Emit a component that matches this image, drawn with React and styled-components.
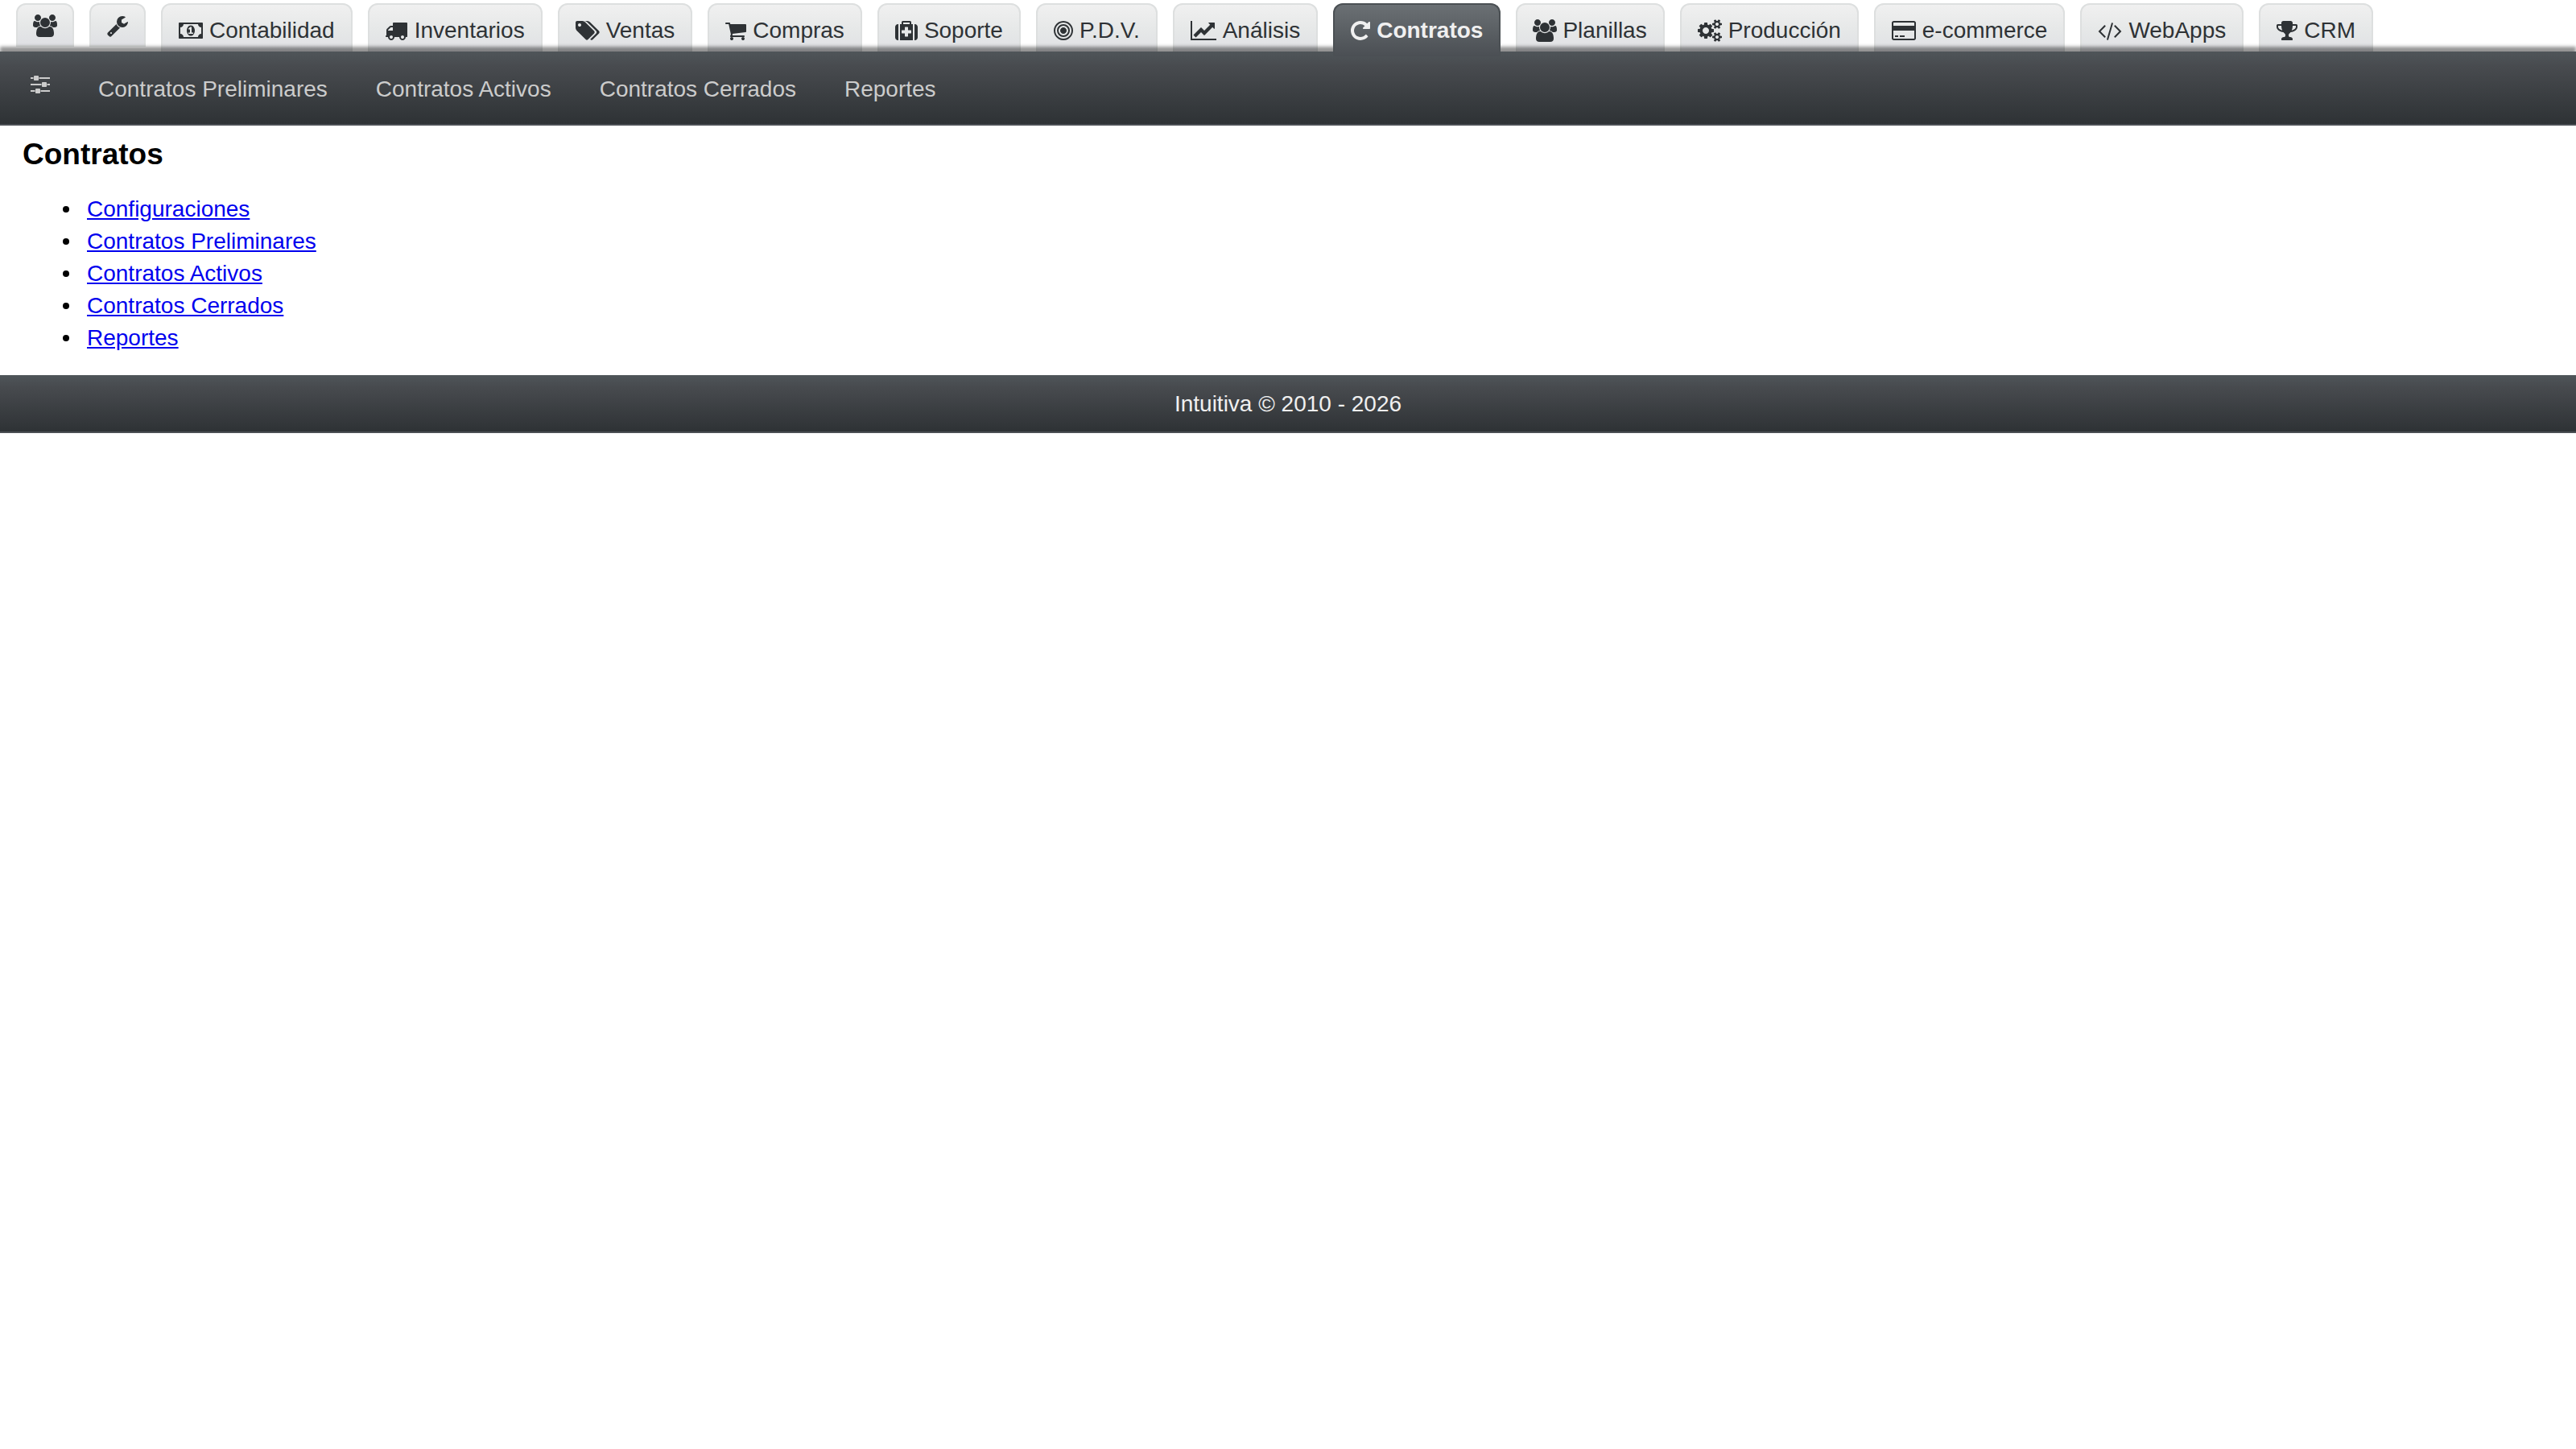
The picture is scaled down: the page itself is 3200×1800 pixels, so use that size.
import React from "react";
import styled, { createGlobalStyle, css } from "styled-components";

const GlobalStyle = createGlobalStyle`
  body {
    margin: 0;
    background: #ffffff;
    color: #000000;
    font: 28px/40px "Liberation Sans", Arial, Helvetica, sans-serif;
  }
`;

/* Glyph outlines on a 1792-unit em square; "x" and "w" give the drawn span. */
const glyphs = {
  users: { x: 128, w: 1792, d: "M657 896q-162 5-265 128h-134q-82 0-138-40.5t-56-118.5q0-353 124-353 6 0 43.5 21t97.5 42.5 119 21.5q67 0 133-23-5 37-5 66 0 139 81 256zm1071 637q0 120-73 189.5t-194 69.5h-874q-121 0-194-69.5t-73-189.5q0-53 3.5-103.5t14-109 26.5-108.5 43-97.5 62-81 85.5-53.5 111.5-20q10 0 43 21.5t73 48 107 48 135 21.5 135-21.5 107-48 73-48 43-21.5q61 0 111.5 20t85.5 53.5 62 81 43 97.5 26.5 108.5 14 109 3.5 103.5zm-1024-1277q0 106-75 181t-181 75-181-75-75-181 75-181 181-75 181 75 75 181zm704 384q0 159-112.5 271.5t-271.5 112.5-271.5-112.5-112.5-271.5 112.5-271.5 271.5-112.5 271.5 112.5 112.5 271.5zm576 225q0 78-56 118.5t-138 40.5h-134q-103-123-265-128 81-117 81-256 0-29-5-66 66 23 133 23 59 0 119-21.5t97.5-42.5 43.5-21q124 0 124 353zm-128-609q0 106-75 181t-181 75-181-75-75-181 75-181 181-75 181 75 75 181z" },
  wrench: { x: 64, w: 1664, d: "M448 1472q0-26-19-45t-45-19-45 19-19 45 19 45 45 19 45-19 19-45zm644-420l-682 682q-37 37-90 37-52 0-91-37l-106-108q-38-36-38-90 0-53 38-91l681-681q39 98 114.5 173.5t173.5 114.5zm634-435q0 39-23 106-47 134-164.5 217.5t-258.5 83.5q-185 0-316.5-131.5t-131.5-316.5 131.5-316.5 316.5-131.5q58 0 121.5 16.5t107.5 46.5q16 11 16 28t-16 28l-293 169v224l193 107q5-3 79-48.5t135.5-81 70.5-35.5q15 0 23.5 10t8.5 25z" },
  money: { x: 0, w: 1920, d: "M768 1152h384v-96h-128v-448h-114l-148 137 77 80q42-37 55-57h2v288h-128v96zm512-256q0 70-21 142t-59.5 134-101.5 101-138 39-138-39-101.5-101-59.5-134-21-142 21-142 59.5-134 101.5-101 138-39 138 39 101.5 101 59.5 134 21 142zm512 256v-512q-106 0-181-75t-75-181h-1152q0 106-75 181t-181 75v512q106 0 181 75t75 181h1152q0-106 75-181t181-75zm128-832v1152q0 26-19 45t-45 19h-1792q-26 0-45-19t-19-45v-1152q0-26 19-45t45-19h1792q26 0 45 19t19 45z" },
  truck: { x: 64, w: 1792, d: "M640 1408q0-52-38-90t-90-38-90 38-38 90 38 90 90 38 90-38 38-90zm-384-512h384v-256h-158q-13 0-22 9l-195 195q-9 9-9 22v30zm1280 512q0-52-38-90t-90-38-90 38-38 90 38 90 90 38 90-38 38-90zm256-1088v1024q0 15-4 26.5t-13.5 18.5-16.5 11.5-23.5 6-22.5 2-25.5 0-22.5-.5q0 106-75 181t-181 75-181-75-75-181h-384q0 106-75 181t-181 75-181-75-75-181h-64q-3 0-22.5.5t-25.5 0-22.5-2-23.5-6-16.5-11.5-13.5-18.5-4-26.5q0-26 19-45t45-19v-320q0-8-.5-35t0-38 2.5-34.5 6.5-37 14-30.5 22.5-30l198-198q19-19 50.5-32t58.5-13h160v-192q0-26 19-45t45-19h1024q26 0 45 19t19 45z" },
  tags: { x: 0, w: 1920, d: "M448 448q0-53-37.5-90.5t-90.5-37.5-90.5 37.5-37.5 90.5 37.5 90.5 90.5 37.5 90.5-37.5 37.5-90.5zm1067 576q0 53-37 90l-491 492q-39 37-91 37-53 0-90-37l-715-716q-38-37-64.5-101t-26.5-117v-416q0-52 38-90t90-38h416q53 0 117 26.5t102 64.5l715 714q37 39 37 91zm384 0q0 53-37 90l-491 492q-39 37-91 37-36 0-59-14t-53-45l470-470q37-37 37-90 0-52-37-91l-715-714q-38-38-102-64.5t-117-26.5h224q53 0 117 26.5t102 64.5l715 714q37 39 37 91z" },
  cart: { x: 64, w: 1664, d: "M704 1536q0 52-38 90t-90 38-90-38-38-90 38-90 90-38 90 38 38 90zm896 0q0 52-38 90t-90 38-90-38-38-90 38-90 90-38 90 38 38 90zm128-1088v512q0 24-16.5 42.5t-40.5 21.5l-1044 122q13 60 13 70 0 16-24 64h920q26 0 45 19t19 45-19 45-45 19h-1024q-26 0-45-19t-19-45q0-11 8-31.5t16-36 21.5-40 15.5-29.5l-177-823h-204q-26 0-45-19t-19-45 19-45 45-19h256q16 0 28.5 6.5t19.5 15.5 13 24.5 8 26 5.5 29.5 4.5 26h1201q26 0 45 19t19 45z" },
  medkit: { x: 0, w: 1792, d: "M1280 1088v-192q0-14-9-23t-23-9h-224v-224q0-14-9-23t-23-9h-192q-14 0-23 9t-9 23v224h-224q-14 0-23 9t-9 23v192q0 14 9 23t23 9h224v224q0 14 9 23t23 9h192q14 0 23-9t9-23v-224h224q14 0 23-9t9-23zm-640-704h512v-128h-512v128zm-384 0v1280h-32q-92 0-158-66t-66-158v-832q0-92 66-158t158-66h32zm1152 0v1280h-1024v-1280h128v-160q0-40 28-68t68-28h576q40 0 68 28t28 68v160h128zm384 224v832q0 92-66 158t-158 66h-32v-1280h32q92 0 158 66t66 158z" },
  bullseye: { x: 128, w: 1536, d: "M1152 896q0 106-75 181t-181 75-181-75-75-181 75-181 181-75 181 75 75 181zm128 0q0-159-112.5-271.5t-271.5-112.5-271.5 112.5-112.5 271.5 112.5 271.5 271.5 112.5 271.5-112.5 112.5-271.5zm128 0q0 212-150 362t-362 150-362-150-150-362 150-362 362-150 362 150 150 362zm128 0q0-130-51-248.5t-136.5-204-204-136.5-248.5-51-248.5 51-204 136.5-136.5 204-51 248.5 51 248.5 136.5 204 204 136.5 248.5 51 248.5-51 204-136.5 136.5-204 51-248.5zm128 0q0 209-103 385.5t-279.5 279.5-385.5 103-385.5-103-279.5-279.5-103-385.5 103-385.5 279.5-279.5 385.5-103 385.5 103 279.5 279.5 103 385.5z" },
  chart: { x: 0, w: 2048, d: "M2048 1536v128h-2048v-1536h128v1408h1920zm-128-1248v435q0 21-19.5 29.5t-35.5-7.5l-121-121-633 633q-10 10-23 10t-23-10l-233-233-416 416-192-192 585-585q10-10 23-10t23 10l233 233 464-464-121-121q-16-16-7.5-35.5t29.5-19.5h435q14 0 23 9t9 23z" },
  repeat: { x: 128, w: 1536, d: "M1664 256v448q0 26-19 45t-45 19h-448q-42 0-59-40-17-39 14-69l138-138q-148-137-349-137-104 0-198.5 40.5t-163.5 109.5-109.5 163.5-40.5 198.5 40.5 198.5 109.5 163.5 163.5 109.5 198.5 40.5q119 0 225-52t179-147q7-10 23-12 15 0 25 9l137 138q9 8 9.5 20.5t-7.5 22.5q-109 132-264 204.5t-327 72.5q-156 0-298-61t-245-164-164-245-61-298 61-298 164-245 245-164 298-61q147 0 284.5 55.5t244.5 156.5l130-129q29-31 70-14 39 17 39 59z" },
  cogs: { x: 0, w: 1920, d: "M896 896q0-106-75-181t-181-75-181 75-75 181 75 181 181 75 181-75 75-181zm768 512q0-52-38-90t-90-38-90 38-38 90q0 53 37.5 90.5t90.5 37.5 90.5-37.5 37.5-90.5zm0-1024q0-52-38-90t-90-38-90 38-38 90q0 53 37.5 90.5t90.5 37.5 90.5-37.5 37.5-90.5zm-384 421v185q0 10-7 19.5t-16 10.5l-155 24q-11 35-32 76 34 48 90 115 7 11 7 20 0 12-7 19-23 30-82.5 89.5t-78.5 59.5q-11 0-21-7l-115-90q-37 19-77 31-11 108-23 155-7 24-30 24h-186q-11 0-20-7.5t-10-17.5l-23-153q-34-10-75-31l-118 89q-7 7-20 7-11 0-21-8-144-133-144-160 0-9 7-19 10-14 41-53t47-61q-23-44-35-82l-152-24q-10-1-17-9.5t-7-19.5v-185q0-10 7-19.5t16-10.5l155-24q11-35 32-76-34-48-90-115-7-11-7-20 0-12 7-20 22-30 82-89t79-59q11 0 21 7l115 90q34-18 77-32 11-108 23-154 7-24 30-24h186q11 0 20 7.5t10 17.5l23 153q34 10 75 31l118-89q8-7 20-7 11 0 21 8 144 133 144 160 0 8-7 19-12 16-42 54t-45 60q23 48 34 82l152 23q10 2 17 10.5t7 19.5zm640 533v140q0 16-149 31-12 27-30 52 51 113 51 138 0 4-4 7-122 71-124 71-8 0-46-47t-52-68q-20 2-30 2t-30-2q-14 21-52 68t-46 47q-2 0-124-71-4-3-4-7 0-25 51-138-18-25-30-52-149-15-149-31v-140q0-16 149-31 13-29 30-52-51-113-51-138 0-4 4-7 4-2 35-20t59-34 30-16q8 0 46 46.5t52 67.5q20-2 30-2t30 2q51-71 92-112l6-2q4 0 124 70 4 3 4 7 0 25-51 138 17 23 30 52 149 15 149 31zm0-1024v140q0 16-149 31-12 27-30 52 51 113 51 138 0 4-4 7-122 71-124 71-8 0-46-47t-52-68q-20 2-30 2t-30-2q-14 21-52 68t-46 47q-2 0-124-71-4-3-4-7 0-25 51-138-18-25-30-52-149-15-149-31v-140q0-16 149-31 13-29 30-52-51-113-51-138 0-4 4-7 4-2 35-20t59-34 30-16q8 0 46 46.5t52 67.5q20-2 30-2t30 2q51-71 92-112l6-2q4 0 124 70 4 3 4 7 0 25-51 138 17 23 30 52 149 15 149 31z" },
  card: { x: 0, w: 1920, d: "M1760 128q66 0 113 47t47 113v1216q0 66-47 113t-113 47h-1600q-66 0-113-47t-47-113v-1216q0-66 47-113t113-47h1600zm-1600 128q-13 0-22.5 9.5t-9.5 22.5v224h1664v-224q0-13-9.5-22.5t-22.5-9.5h-1600zm1600 1280q13 0 22.5-9.5t9.5-22.5v-608h-1664v608q0 13 9.5 22.5t22.5 9.5h1600zm-1504-128v-128h256v128h-256zm384 0v-128h384v128h-384z" },
  code: { x: 0, w: 1920, d: "M617 1399l-50 50q-10 10-23 10t-23-10l-466-466q-10-10-10-23t10-23l466-466q10-10 23-10t23 10l50 50q10 10 10 23t-10 23l-393 393 393 393q10 10 10 23t-10 23zm591-1067l-373 1291q-4 13-15.5 19.5t-23.5 2.5l-62-17q-13-4-19.5-15.5t-2.5-24.5l373-1291q4-13 15.5-19.5t23.5-2.5l62 17q13 4 19.5 15.5t2.5 24.5zm657 651l-466 466q-10 10-23 10t-23-10l-50-50q-10-10-10-23t10-23l393-393-393-393q-10-10-10-23t10-23l50-50q10-10 23-10t23 10l466 466q10 10 10 23t-10 23z" },
  trophy: { x: 64, w: 1664, d: "M522 883q-74-162-74-371h-256v96q0 78 94.5 162t235.5 113zm1078-275v-96h-256q0 209-74 371 141-29 235.5-113t94.5-162zm128-128v128q0 71-41.5 143t-112 130-173 97.5-215.5 44.5q-42 54-95 95-38 34-52.5 72.5t-14.5 89.5q0 54 30.5 91t97.5 37q75 0 133.5 45.5t58.5 114.5v64q0 14-9 23t-23 9h-832q-14 0-23-9t-9-23v-64q0-69 58.5-114.5t133.5-45.5q67 0 97.5-37t30.5-91q0-51-14.5-89.5t-52.5-72.5q-53-41-95-95-113-5-215.5-44.5t-173-97.5-112-130-41.5-143v-128q0-40 28-68t68-28h288v-96q0-66 47-113t113-47h576q66 0 113 47t47 113v96h288q40 0 68 28t28 68z" },
  sliders: { x: 128, w: 1536, d: "M480 1408v128h-352v-128h352zm352-128q26 0 45 19t19 45v256q0 26-19 45t-45 19h-256q-26 0-45-19t-19-45v-256q0-26 19-45t45-19h256zm160-384v128h-864v-128h864zm-640-512v128h-224v-128h224zm1312 1024v128h-736v-128h736zm-960-1152q26 0 45 19t19 45v256q0 26-19 45t-45 19h-256q-26 0-45-19t-19-45v-256q0-26 19-45t45-19h256zm640 512q26 0 45 19t19 45v256q0 26-19 45t-45 19h-256q-26 0-45-19t-19-45v-256q0-26 19-45t45-19h256zm320 128v128h-224v-128h224zm0-512v128h-864v-128h864z" },
};

const Glyph = styled.svg`
  display: block;
  flex: none;
  height: 28px;
  fill: currentColor;
  overflow: visible;
`;

function Icon({ name }) {
  const { x, w, d } = glyphs[name];
  return (
    <Glyph viewBox={`${x} 0 ${w} 1792`} width={w / 64} aria-hidden="true">
      <path d={d} />
    </Glyph>
  );
}

const bar = css`
  background: linear-gradient(#4f5559, #484b4f 20%, #2e3235);
  border-bottom: 2px solid #4b4f54;
`;

const TabBar = styled.nav`
  display: flex;
  align-items: flex-start;
  gap: 19px;
  height: 60px;
  padding: 4px 20px 0;
`;

const Tab = styled.a`
  display: flex;
  box-sizing: border-box;
  align-items: center;
  gap: 8px;
  height: ${(p) => (p.$compact ? 54 : 66)}px;
  padding: 2px 20px 0;
  border: 2px solid #dddfdf;
  border-radius: 12px 12px 0 0;
  background: linear-gradient(#f0f0f0, #e6e8e8 50%, #dfe0e4);
  color: #2e3235;
  text-decoration: none;
  white-space: nowrap;

  ${(p) =>
    p.$active &&
    css`
      position: relative;
      z-index: 2;
      padding-bottom: 2px;
      border-color: #4b5054;
      border-bottom: none;
      background: linear-gradient(#6b7074, #4b4f54);
      color: #f0f0f0;
      font-weight: bold;
    `}
`;

const MenuBar = styled.nav`
  ${bar}
  position: relative;
  z-index: 1;
  display: flex;
  align-items: center;
  gap: 60px;
  height: 90px;
  padding: 0 38px;
  box-shadow: 0 -6px 4px rgba(0, 0, 0, 0.42);
`;

const MenuLink = styled.a`
  padding: ${(p) => (p.$icon ? "0 0 10px" : "4px 0 0")};
  color: #cccccc;
  text-decoration: none;
`;

const Content = styled.main`
  padding: 16px 28px 26px;
`;

const Title = styled.h1`
  margin: 0 0 28px;
  font-size: 37px;
  line-height: 40px;
`;

const List = styled.ul`
  margin: 0;
  padding: 0 0 0 50px;
  list-style: none;
`;

const ListItem = styled.li`
  display: flex;
  align-items: center;
  gap: 22px;

  &::before {
    content: "";
    width: 8px;
    height: 8px;
    border-radius: 50%;
    background: currentColor;
  }
`;

const ListLink = styled.a`
  color: #0000ee;
`;

const Footer = styled.footer`
  ${bar}
  padding: 16px 0 14px;
  color: #f0f0f0;
  text-align: center;
`;

const tabs = [
  { icon: "users", title: "Usuarios" },
  { icon: "wrench", title: "Herramientas" },
  { icon: "money", label: "Contabilidad" },
  { icon: "truck", label: "Inventarios" },
  { icon: "tags", label: "Ventas" },
  { icon: "cart", label: "Compras" },
  { icon: "medkit", label: "Soporte" },
  { icon: "bullseye", label: "P.D.V." },
  { icon: "chart", label: "Análisis" },
  { icon: "repeat", label: "Contratos", active: true },
  { icon: "users", label: "Planillas" },
  { icon: "cogs", label: "Producción" },
  { icon: "card", label: "e-commerce" },
  { icon: "code", label: "WebApps" },
  { icon: "trophy", label: "CRM" },
];

const sections = ["Contratos Preliminares", "Contratos Activos", "Contratos Cerrados", "Reportes"];

export default function App() {
  return (
    <>
      <GlobalStyle />
      <header>
        <TabBar>
          {tabs.map((tab) => (
            <Tab key={tab.label || tab.title} href="#" $compact={!tab.label} $active={tab.active}>
              <Icon name={tab.icon} />
              {tab.label}
            </Tab>
          ))}
        </TabBar>
        <MenuBar>
          <MenuLink href="#" $icon>
            <Icon name="sliders" />
          </MenuLink>
          {sections.map((name) => (
            <MenuLink key={name} href="#">
              {name}
            </MenuLink>
          ))}
        </MenuBar>
      </header>
      <Content>
        <Title>Contratos</Title>
        <List>
          {["Configuraciones", ...sections].map((name) => (
            <ListItem key={name}>
              <ListLink href="#">{name}</ListLink>
            </ListItem>
          ))}
        </List>
      </Content>
      <Footer>Intuitiva © 2010 - 2026</Footer>
    </>
  );
}
